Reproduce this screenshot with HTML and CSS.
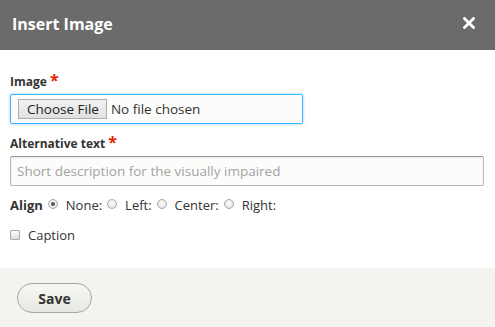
FILE: index.html
```html
<!DOCTYPE html>
<html lang="en">
<head>
<meta charset="utf-8">
<title>Insert Image</title>
<link rel="stylesheet" href="styles.css">
</head>
<body>
<div class="dialog">
  <div class="titlebar">
    <span class="title">Insert Image</span>
    <button class="close" type="button" aria-label="Close">
      <svg width="12" height="12" viewBox="0 0 12 12"><path d="M1.5 1.5 L10.5 10.5 M10.5 1.5 L1.5 10.5" stroke="#fff" stroke-width="2.8" stroke-linecap="square"/></svg>
    </button>
  </div>
  <div class="content">
    <div class="field">
      <label class="label">Image <span class="req">*</span></label>
      <div class="file-input"><span class="file-btn">Choose File</span><span class="file-name">No file chosen</span></div>
    </div>
    <div class="field">
      <label class="label">Alternative text <span class="req">*</span></label>
      <input class="text-input" type="text" placeholder="Short description for the visually impaired">
    </div>
    <div class="align-row">
      <span class="align-label">Align</span>
      <span class="opt"><span class="radio checked"></span>None:</span>
      <span class="opt"><span class="radio"></span>Left:</span>
      <span class="opt"><span class="radio"></span>Center:</span>
      <span class="opt"><span class="radio"></span>Right:</span>
    </div>
    <div class="caption-row"><span class="checkbox"></span>Caption</div>
  </div>
  <div class="actions">
    <button class="save" type="button">Save</button>
  </div>
</div>
</body>
</html>
```

FILE: styles.css
```css
html, body {
  margin: 0;
  padding: 0;
  background: #fff;
}
body {
  font-family: "Open Sans", "DejaVu Sans", sans-serif;
  color: #333;
}
.dialog {
  width: 495px;
  height: 327px;
  display: flex;
  flex-direction: column;
}
.titlebar {
  height: 50px;
  flex: none;
  background: #6b6b6b;
  display: flex;
  align-items: center;
  justify-content: space-between;
  padding: 0 20px 0 12px;
}
.title {
  color: #fff;
  font-weight: 700;
  font-size: 16px;
  line-height: 20px;
  margin-top: -3px;
}
.close {
  border: 0;
  background: none;
  padding: 0;
  width: 12px;
  height: 12px;
  display: flex;
  margin-top: -4px;
}
.content {
  flex: 1;
  padding: 24px 11px 0 10px;
}
.field {
  display: flex;
  flex-direction: column;
  gap: 4px;
  margin-bottom: 12px;
}
.label {
  display: block;
  font-size: 12px;
  font-weight: 700;
  line-height: 16px;
  color: #333;
}
.req {
  color: #e62600;
  font-size: 16px;
  line-height: 10px;
}
.file-input {
  width: 293px;
  height: 30px;
  box-sizing: border-box;
  border: 1px solid #40b6ff;
  border-radius: 2px;
  background: #fcfcfa;
  box-shadow: 0 0 3px rgba(64, 182, 255, 0.6);
  display: flex;
  align-items: center;
  padding-left: 7px;
  font-size: 13.5px;
  color: #333;
}
.file-btn {
  height: 20px;
  box-sizing: border-box;
  border: 1px solid #adadad;
  background: linear-gradient(#f2f2f2, #e1e1e1);
  padding: 0 7px 0 8px;
  line-height: 18px;
  font-size: 13.5px;
  color: #222;
  margin-right: 4px;
}
.text-input {
  display: block;
  width: 474px;
  height: 30px;
  box-sizing: border-box;
  border: 1px solid #b8b8b8;
  border-top-color: #999;
  border-radius: 2px;
  background: #fcfcfa;
  box-shadow: inset 0 1px 2px rgba(0, 0, 0, 0.08);
  padding: 0 6px;
  font-family: "Open Sans", "DejaVu Sans", sans-serif;
  font-size: 13.5px;
  color: #333;
  margin: 0;
}
.text-input::placeholder {
  color: #a3a3a3;
}
.align-row {
  display: flex;
  align-items: center;
  font-size: 13px;
  line-height: 18px;
  margin-top: -2px;
  color: #333;
}
.align-label {
  font-weight: 700;
  margin-right: 5px;
}
.opt {
  display: flex;
  align-items: center;
  margin-right: 5px;
}
.radio {
  width: 10px;
  height: 10px;
  box-sizing: border-box;
  border-radius: 50%;
  border: 1px solid #a9a9a9;
  background: radial-gradient(circle at 50% 40%, #fdfdfd, #dcdcdc);
  margin-right: 8px;
  display: flex;
  align-items: center;
  justify-content: center;
  margin-top: -3px;
}
.radio.checked::after {
  content: "";
  width: 4px;
  height: 4px;
  border-radius: 50%;
  background: #555;
}
.caption-row {
  display: flex;
  align-items: center;
  font-size: 13px;
  line-height: 18px;
  margin-top: 12px;
  color: #333;
}
.checkbox {
  width: 10px;
  height: 10px;
  box-sizing: border-box;
  border: 1px solid #a9a9a9;
  border-radius: 1px;
  background: linear-gradient(#fdfdfd, #dedede);
  margin-right: 8px;
  margin-top: -1px;
}
.actions {
  height: 59px;
  flex: none;
  background: #f3f4ef;
  padding: 15px 0 0 17px;
  box-sizing: border-box;
}
.save {
  width: 75px;
  height: 30px;
  border: 1px solid #a6a6a6;
  border-radius: 20px;
  background: linear-gradient(#f7f7f3, #e8e8e2);
  font-family: "Open Sans", "DejaVu Sans", sans-serif;
  font-weight: 700;
  font-size: 14px;
  color: #333;
  padding: 0;
}
```
